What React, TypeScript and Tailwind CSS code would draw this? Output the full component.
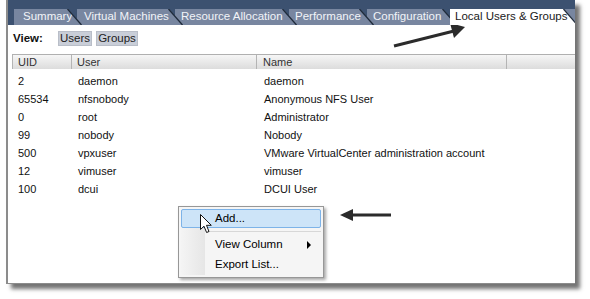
const tabs = [
  { label: "Summary", width: "w-[68px]", ml: "ml-[6px]", pl: "pl-[9px]", z: "z-[7]", active: false },
  { label: "Virtual Machines", width: "w-[106px]", ml: "-ml-[5px]", pl: "pl-[7px]", z: "z-[6]", active: false },
  { label: "Resource Allocation", width: "w-[122px]", ml: "-ml-[8px]", pl: "pl-[6px]", z: "z-[5]", active: false },
  { label: "Performance", width: "w-[85px]", ml: "-ml-[8px]", pl: "pl-[6px]", z: "z-[4]", active: false },
  { label: "Configuration", width: "w-[90px]", ml: "-ml-[7px]", pl: "pl-[6px]", z: "z-[3]", active: false },
  { label: "Local Users & Groups", width: "w-[128px]", ml: "-ml-[7px]", pl: "pl-[5px]", z: "z-[8]", active: true }
];

const users = [
  { uid: "2", user: "daemon", name: "daemon" },
  { uid: "65534", user: "nfsnobody", name: "Anonymous NFS User" },
  { uid: "0", user: "root", name: "Administrator" },
  { uid: "99", user: "nobody", name: "Nobody" },
  { uid: "500", user: "vpxuser", name: "VMware VirtualCenter administration account" },
  { uid: "12", user: "vimuser", name: "vimuser" },
  { uid: "100", user: "dcui", name: "DCUI User" }
];

function Tab({ label, width, ml, pl, z, active }: (typeof tabs)[number]) {
  return (
    <div className={`relative h-[16px] shrink-0 ${width} ${ml} ${z}`}>
      <div
        className={`flex h-full items-center ${pl} [clip-path:polygon(0_0,calc(100%-14px)_0,100%_100%,0_100%)] ${
          active ? "bg-white text-[#1a1a1a]" : "bg-[#7886a0] text-[#f2f4f8]"
        }`}
      >
        <span className="whitespace-nowrap text-[11.5px] leading-none">{label}</span>
      </div>
      <svg className="absolute right-0 top-0 h-[16px] w-[15px]" viewBox="0 0 15 16">
        <line x1="0.5" y1="0" x2="14.5" y2="16" stroke="#1e2a3a" strokeWidth="1.3" />
      </svg>
    </div>
  );
}

function ContextMenu() {
  return (
    <div className="absolute left-[178px] top-[206px] w-[146px] border border-[#979797] bg-[#f5f5f5] p-[2px] shadow-[2px_2px_3px_rgba(0,0,0,0.35)]">
      <div className="absolute bottom-[2px] left-[2px] top-[2px] w-[24px] bg-gradient-to-r from-[#f4f4f4] to-[#e6e6e6]" />
      <div className="relative flex h-[19px] items-center rounded-[2px] border border-[#7db3e8] bg-[#cde4f8] pl-[33px] text-[11.5px] text-black">
        Add...
      </div>
      <div className="relative ml-[25px] mt-[3px] mb-[3px] h-px bg-[#d7d7d7]" />
      <div className="relative flex h-[20px] items-center justify-between pl-[34px] pr-[10px] text-[11.5px] text-black">
        <span>View Column</span>
        <span className="h-0 w-0 border-y-[4px] border-l-[4px] border-y-transparent border-l-black" />
      </div>
      <div className="relative flex h-[20px] items-center pl-[34px] text-[11.5px] text-black">Export List...</div>
    </div>
  );
}

export default function App() {
  return (
    <div className="relative h-[299px] w-[590px] overflow-hidden bg-white font-['Liberation_Sans',Arial,sans-serif]">
      <div className="ml-[6px] h-[284px] w-[569px] overflow-hidden border-l-2 border-b border-[#8c8c8c] bg-white shadow-[5px_5px_4px_rgba(0,0,0,0.55)]">
        <div className="flex h-[25px] items-end bg-[#3c5170]">
          {tabs.map((t) => (
            <Tab key={t.label} {...t} />
          ))}
          <div className="-ml-[14px] h-[16px] w-[20px] shrink-0 bg-[#7886a0]" />
        </div>

        <div className="pl-[4px] pt-[6px]">
          <div className="flex h-[15px] items-center text-[11.5px] text-[#111]">
            <span className="w-[46px] pl-[1px] font-bold">View:</span>
            <span className="flex h-[15px] w-[34px] items-center justify-center border border-[#b9bec8] bg-[#c9ced8] text-[#222]">
              Users
            </span>
            <span className="ml-[4px] flex h-[15px] w-[42px] items-center justify-center border border-[#b9bec8] bg-[#c9ced8] text-[#222]">
              Groups
            </span>
          </div>

          <div className="mt-[8px] flex h-[15px] border-t border-[#b0b0b0] bg-gradient-to-b from-[#f6f6f6] to-[#dcdcdc] text-[11px] text-[#333]">
            <div className="flex w-[60px] items-center border-l border-r border-[#b4b4b4] pl-[5px]">UID</div>
            <div className="flex w-[185px] items-center border-r border-[#b4b4b4] pl-[5px]">User</div>
            <div className="flex w-[250px] items-center border-r border-[#b4b4b4] pl-[6px]">Name</div>
            <div className="flex-1" />
          </div>

          <div className="pt-[3px] text-[11px] text-[#111]">
            {users.map((u) => (
              <div key={u.uid} className="flex h-[18px] items-center">
                <div className="w-[60px] pl-[6px]">{u.uid}</div>
                <div className="w-[185px] pl-[6px]">{u.user}</div>
                <div className="pl-[7px]">{u.name}</div>
              </div>
            ))}
          </div>
        </div>
      </div>

      <ContextMenu />

      {/* cursor */}
      <svg className="absolute left-[200px] top-[214px] h-[20px] w-[13px]" viewBox="0 0 13 20">
        <path d="M0.5 0.5 L0.5 15.5 L4 12.2 L6.6 18.5 L9 17.5 L6.5 11.3 L11.3 11.3 Z" fill="white" stroke="#111" strokeWidth="1" />
      </svg>

      {/* annotation arrows */}
      <svg className="absolute left-[388px] top-[20px] h-[32px] w-[82px]" viewBox="0 0 82 32">
        <line x1="6" y1="26" x2="66" y2="11" stroke="#2b2b2b" strokeWidth="3" />
        <polygon points="77,7 62,3 66,18" fill="#2b2b2b" />
      </svg>
      <svg className="absolute left-[336px] top-[206px] h-[18px] w-[58px]" viewBox="0 0 58 18">
        <line x1="14" y1="9" x2="55" y2="9" stroke="#2b2b2b" strokeWidth="3" />
        <polygon points="4,9 17,3 17,15" fill="#2b2b2b" />
      </svg>
    </div>
  );
}
